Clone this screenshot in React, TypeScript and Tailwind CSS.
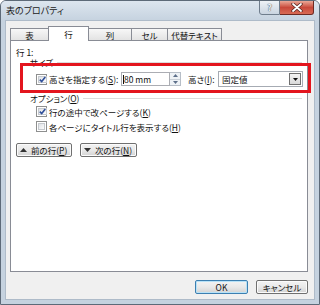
import React from "react";

function Check({ checked }: { checked: boolean }) {
  return (
    <span className="w-[11px] h-[11px] shrink-0 border border-[#8e8f8f] bg-white p-px flex">
      <span className="flex-1 border border-[#c5c9ce] bg-linear-to-br from-[#dfe2e6] to-[#fbfbfc] flex items-center justify-center">
        {checked && (
          <svg width="7" height="7" viewBox="0 0 7 7">
            <path d="M0.8 3.6 L2.7 5.6 L6.3 1" fill="none" stroke="#2f4f9a" strokeWidth="1.6" />
          </svg>
        )}
      </span>
    </span>
  );
}

function Btn({ w, children, def }: { w: string; children: React.ReactNode; def?: boolean }) {
  return (
    <div
      className={
        "h-full rounded-[2px] border flex items-center bg-linear-to-b from-[#f3f3f3] via-[#e9e9e9] to-[#d3d3d3] " +
        (def
          ? "border-[#3c7fb1] shadow-[inset_0_0_0_1px_#b8e2f7] "
          : "border-[#707070] shadow-[inset_0_0_0_1px_#fbfbfb] ") +
        w
      }
    >
      {children}
    </div>
  );
}

export default function App() {
  return (
    <div className="relative w-[320px] h-[305px] border border-[#5d6a78] rounded-t-[6px] bg-[#c5d2df] flex flex-col overflow-hidden font-['Noto_Sans_CJK_JP',sans-serif] [font-feature-settings:'palt'] text-[8.5px] text-[#111]">
      {/* title bar */}
      <div className="h-[20px] flex items-start justify-between bg-linear-to-b from-[#dde6ef] to-[#c5d2df]">
        <span className="pl-[5px] pt-[5px] text-[9px] leading-[10px] text-[#1b1b1b]">表のプロパティ</span>
        <div className="flex mr-[5px] -mt-px">
          <div className="w-[21px] h-[15px] border border-[#6f7d8c] rounded-bl-[3px] bg-linear-to-b from-[#eef2f6] to-[#c9d4e0] flex items-center justify-center">
            <span className="text-[9px] leading-[9px] font-bold text-[#eef2f6] [text-shadow:0_0_1px_#4d5966,0_0_1px_#4d5966]">?</span>
          </div>
          <div className="w-[34px] h-[15px] border border-[#6e2a22] border-l-0 rounded-br-[3px] bg-linear-to-b from-[#e9a898] via-[#c8493b] to-[#d86a54] flex items-center justify-center">
            <svg width="12" height="9" viewBox="0 0 12 9">
              <path d="M2 1 L10 8 M10 1 L2 8" stroke="#5a2a24" strokeWidth="3.4" strokeLinecap="round" />
              <path d="M2 1 L10 8 M10 1 L2 8" stroke="#ffffff" strokeWidth="1.8" strokeLinecap="round" />
            </svg>
          </div>
        </div>
      </div>

      {/* client area */}
      <div className="mx-[5px] h-[278px] bg-[#f0f0f0] shadow-[0_0_0_1px_#aebbc9] pl-[4px] pr-[6px] pt-[5px] flex flex-col">
        {/* tabs */}
        <div className="h-[14px] flex items-end">
          <div className="w-[38px] h-[12px] border-l border-t border-[#898c95] bg-linear-to-b from-[#f7f7f7] to-[#e3e3e3] flex items-center justify-center leading-[10px]">表</div>
          <div className="relative z-10 -mb-px w-[41px] h-[15px] border-l border-t border-r border-[#898c95] bg-white flex items-center justify-center leading-[10px] pb-px">行</div>
          <div className="w-[42px] h-[12px] border-t border-[#898c95] bg-linear-to-b from-[#f7f7f7] to-[#e3e3e3] flex items-center justify-center leading-[10px]">列</div>
          <div className="w-[36px] h-[12px] border-l border-t border-[#898c95] bg-linear-to-b from-[#f7f7f7] to-[#e3e3e3] flex items-center justify-center leading-[10px]">セル</div>
          <div className="w-[55px] h-[12px] border-l border-t border-r border-[#898c95] bg-linear-to-b from-[#f7f7f7] to-[#e3e3e3] flex items-center justify-center leading-[10px]">代替テキスト</div>
        </div>

        {/* panel */}
        <div className="h-[232px] border border-[#898c95] bg-white flex flex-col">
          <div className="pl-[5px] pt-[6px] h-[16px] leading-[10px]">行 1:</div>
          <div className="h-[10px] flex items-center pl-[19px] pr-[5px] leading-[10px]">
            <span>サイズ</span>
            <span className="flex-1 ml-[4px] h-px bg-[#dcdcdc]" />
          </div>
          <div className="mt-[4px] h-[16px] flex items-center pl-[25px]">
            <Check checked />
            <span className="ml-[2px] w-[72px] leading-[10px] whitespace-nowrap">
              高さを指定する(<u>S</u>):
            </span>
            <div className="w-[49px] h-[14px] border border-[#abadb3] bg-white flex items-center pl-[1px] leading-[10px]">
              <span className="w-px h-[9px] bg-[#111]" />
              <span>80 mm</span>
            </div>
            <div className="w-[11px] h-[14px] border border-l-0 border-[#b7bec7] bg-[#eef2f6] flex flex-col">
              <div className="flex-1 flex items-center justify-center border-b border-[#c9d0d8]">
                <svg width="5" height="3" viewBox="0 0 5 3"><path d="M0 3 L2.5 0 L5 3 Z" fill="#5d6f8a" /></svg>
              </div>
              <div className="flex-1 flex items-center justify-center">
                <svg width="5" height="3" viewBox="0 0 5 3"><path d="M0 0 L2.5 3 L5 0 Z" fill="#5d6f8a" /></svg>
              </div>
            </div>
            <span className="ml-[7px] w-[30px] leading-[10px] whitespace-nowrap">
              高さ(<u>I</u>):
            </span>
            <div className="w-[85px] h-[16px] border border-[#a6abb3] bg-white flex items-center pl-[3px] pr-[1px]">
              <span className="flex-1 leading-[10px]">固定値</span>
              <div className="w-[12px] h-[12px] border border-[#707070] bg-linear-to-b from-[#f4f4f4] to-[#d9d9d9] flex items-center justify-center">
                <svg width="5" height="3" viewBox="0 0 5 3"><path d="M0 0 L2.5 3 L5 0 Z" fill="#111" /></svg>
              </div>
            </div>
          </div>

          <div className="mt-[6px] h-[10px] flex items-center pl-[19px] pr-[5px] leading-[10px]">
            <span>
              オプション(<u>O</u>)
            </span>
            <span className="flex-1 ml-[4px] h-px bg-[#dcdcdc]" />
          </div>
          <div className="mt-[3px] h-[11px] flex items-center pl-[25px]">
            <Check checked />
            <span className="ml-[2px] leading-[10px] whitespace-nowrap">
              行の途中で改ページする(<u>K</u>)
            </span>
          </div>
          <div className="mt-[4px] h-[11px] flex items-center pl-[25px]">
            <Check checked={false} />
            <span className="ml-[2px] leading-[10px] whitespace-nowrap">
              各ページにタイトル行を表示する(<u>H</u>)
            </span>
          </div>

          <div className="mt-[11px] h-[14px] flex pl-[5px] gap-[8px]">
            <Btn w="w-[56px]">
              <svg className="ml-[3px]" width="7" height="4" viewBox="0 0 7 4"><path d="M0 4 L3.5 0 L7 4 Z" fill="#333" /></svg>
              <span className="ml-[4px] leading-[10px] whitespace-nowrap">
                前の行(<u>P</u>)
              </span>
            </Btn>
            <Btn w="w-[57px]">
              <svg className="ml-[3px]" width="7" height="4" viewBox="0 0 7 4"><path d="M0 0 L3.5 4 L7 0 Z" fill="#333" /></svg>
              <span className="ml-[4px] leading-[10px] whitespace-nowrap">
                次の行(<u>N</u>)
              </span>
            </Btn>
          </div>
        </div>

        {/* footer */}
        <div className="mt-[8px] h-[14px] flex justify-end gap-[8px]">
          <Btn w="w-[53px] justify-center" def>
            <span className="leading-[10px]">OK</span>
          </Btn>
          <Btn w="w-[52px] justify-center">
            <span className="leading-[10px]">キャンセル</span>
          </Btn>
        </div>
      </div>

      {/* red highlight annotation */}
      <div className="absolute left-[19px] top-[62px] w-[291px] h-[30px] border-[3px] border-[#e3151e]" />
    </div>
  );
}
